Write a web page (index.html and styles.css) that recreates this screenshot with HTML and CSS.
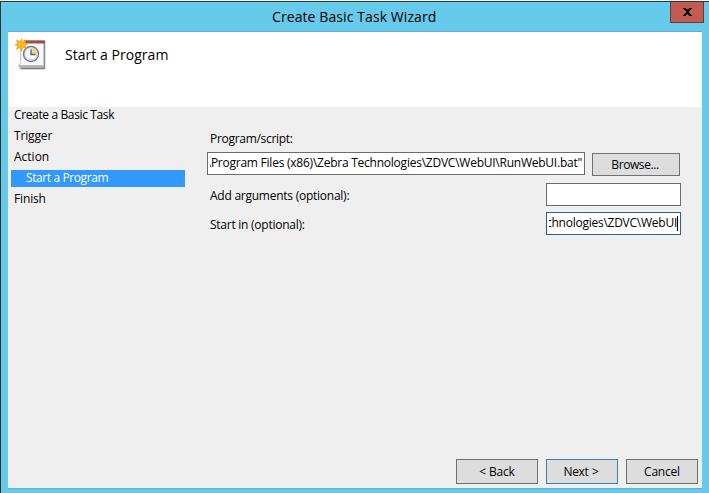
FILE: index.html
```html
<!DOCTYPE html>
<html lang="en">
<head>
<meta charset="utf-8">
<title>Create Basic Task Wizard</title>
<link rel="stylesheet" href="styles.css">
</head>
<body>
<div class="window">
  <header class="titlebar">
    <h1 class="caption">Create Basic Task Wizard</h1>
    <button class="close" aria-label="Close"><svg width="9" height="8" viewBox="0 0 9 8" shape-rendering="crispEdges"><path d="M0 0h3v1h3V0h3v1H8v1H7v1H6v2h1v1h1v1h1v1H6V7H5V6H4v1H3v1H0V7h1V6h1V5h1V3H2V2H1V1H0z"/></svg></button>
  </header>
  <main class="client">
    <section class="banner">
      <svg class="task-icon" width="34" height="34" viewBox="0 0 34 34">
        <path d="M8 28l-3 1v1.500h26v-3z" fill="#c9c9c9"/>
        <path d="M6.500 30.500H31" stroke="#777" stroke-width="1.500"/>
        <path d="M6.500 4h23.500v24H4.500l2-3z" fill="#f8f8f8" stroke="#c4c4c4"/>
        <path d="M4.500 28H31" stroke="#999"/>
        <path d="M30.500 3v28" stroke="#8c8c8c" stroke-width="1.500"/>
        <path d="M10 2h21v3.500H10z" fill="#995443"/>
        <path d="M10 2.500h21" stroke="#b8897c"/>
        <circle cx="17" cy="16" r="7.500" fill="#e7edf3" stroke="#747b83" stroke-width="1.400"/>
        <circle cx="17" cy="16" r="6" fill="#f8fafc" stroke="#c1cbd5" stroke-width=".7"/>
        <path d="M17 16V9.500a6.500 6.500 0 0 1 6.300 7.500z" fill="#f5d28f"/>
        <path d="M17 11.500V16.500h4.500" fill="none" stroke="#526479" stroke-width="1.400"/>
        <path d="M7.500 0l1 3.500L12 1l-.7 3.600L14 6l-2.700 1.300L12.500 11 9 9.500 7.500 14 6 9.700 2 12l1.500-4L0 7l3.400-1.600L2 1.500 6 3.300z" fill="#f39b12"/>
        <circle cx="7.400" cy="6.500" r="4" fill="#ffb51e"/>
      </svg>
      <h2 class="heading">Start a Program</h2>
    </section>
    <div class="content">
      <nav class="steps">
        <div class="step"><span class="s-create">Create a Basic Task</span></div>
        <div class="step"><span class="s-trigger">Trigger</span></div>
        <div class="step"><span class="s-action">Action</span></div>
        <div class="step current"><span class="s-start">Start a Program</span></div>
        <div class="step"><span class="s-finish">Finish</span></div>
      </nav>
      <form class="form">
        <div class="label first"><span class="l-script">Program/script:</span></div>
        <div class="row script-row">
          <div class="field script"><span class="clip"><span class="v-script">\Program Files (x86)\Zebra Technologies\ZDVC\WebUI\RunWebUI.bat"</span></span></div>
          <button type="button" class="btn browse"><span class="b-browse">Browse...</span></button>
        </div>
        <div class="row args-row"><div class="label"><span class="l-args">Add arguments (optional):</span></div><div class="field small"></div></div>
        <div class="row start-row"><div class="label"><span class="l-startin">Start in (optional):</span></div><div class="field small focused"><span class="clip"><span class="v-start">chnologies\ZDVC\WebUI</span></span><i class="caret"></i></div></div>
      </form>
    </div>
    <footer class="actions">
      <button class="btn back"><span class="b-back">&lt; Back</span></button>
      <button class="btn next"><span class="b-next">Next &gt;</span></button>
      <button class="btn cancel"><span class="b-cancel">Cancel</span></button>
    </footer>
  </main>
</div>
</body>
</html>
```
FILE: styles.css
```css
* { box-sizing: border-box; }
body { margin: 0; overflow: hidden; background: #f4f4f4; font: 12px/17px "Open Sans", "Noto Sans", sans-serif; color: #000; }
span { white-space: nowrap; }
.window { margin-top: 1px; width: 709px; height: 492px; border: solid #2e3336; border-width: 1px 0 0 1px; background: #66caea; padding: 0 7px 4px; }
.titlebar { height: 29px; display: flex; justify-content: flex-end; align-items: flex-start; margin-right: -2px; }
.caption { margin: 0 auto 0 264px; font-size: 14px; font-weight: 400; line-height: 29px; white-space: nowrap; letter-spacing: .09px; }
.close { width: 34px; height: 21px; margin: 0; padding: 0 0 1px; border: 1px solid #683a3a; border-top: 0; background: #c45b52; display: flex; align-items: center; justify-content: center; }
.client { width: 694px; height: 458px; border: solid #66add0; border-width: 1px 0; background: #efefef; display: flex; flex-direction: column; }
.banner { height: 75px; background: #fff; display: flex; flex: none; padding: 6px 0 0 6px; }
.task-icon { display: block; }
.heading { margin: 7px 0 0 17px; font-size: 14px; font-weight: 400; line-height: 20px; white-space: nowrap; letter-spacing: .04px; }
.content { display: flex; flex: 1; min-height: 0; }
.steps { width: 174px; margin-left: 3px; }
.step { height: 17px; padding-left: 3px; margin-bottom: 4px; line-height: 16px; }
.current { background: #3399ff; color: #fff; padding-left: 15px; }
.form { width: 474px; margin: 23px 0 0 22px; }
.label { padding-left: 3px; }
.first { height: 22px; }
.row { display: flex; justify-content: space-between; align-items: flex-start; }
.script-row { width: 473px; height: 31px; }
.args-row { height: 29px; }
.args-row .label, .start-row .label { padding-top: 4px; }
.field { height: 23px; border: 1px solid #6c6c6c; background: #fff; padding: 0 2px; display: flex; line-height: 20px; }
.script { width: 378px; }
.small { width: 135px; }
.focused { border-color: #2a6090; }
.clip { flex: 1; min-width: 0; overflow: hidden; display: flex; justify-content: flex-end; }
.caret { width: 1px; height: 15px; margin-top: 3px; background: #000; }
.btn { margin: 0; padding: 0 0 1px; height: 25px; border: 1px solid #707070; background: #dddddd; font: inherit; color: #000; text-align: center; }
.browse { width: 88px; height: 23px; margin-top: 1px; padding: 0 2px 0 0; }
.actions { display: flex; justify-content: flex-end; gap: 8px; padding: 0 4px 4px 0; }
.back { width: 82px; }
.next, .cancel { width: 72px; }
.next { border-color: #3c7fb1; padding-right: 2px; word-spacing: 1px; }
.s-create { letter-spacing: -.37px; }
.s-start { letter-spacing: -.4px; }
.s-trigger, .s-finish { letter-spacing: -.15px; }
.l-script { letter-spacing: -.3px; }
.l-args, .l-startin { letter-spacing: -.25px; }
.v-script { letter-spacing: -.24px; }
.v-start { letter-spacing: -.25px; }
.b-browse, .b-next { letter-spacing: -.42px; }
.b-back { letter-spacing: -.2px; }
.b-cancel { letter-spacing: -.2px; }
```
